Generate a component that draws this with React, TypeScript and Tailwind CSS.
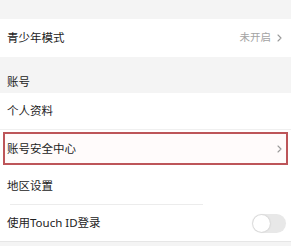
import React from "react";

const font = { fontFamily: '"Noto Sans", "Noto Sans CJK SC", sans-serif' };

const Chevron = ({ className = "" }: { className?: string }) => (
  <svg width="5" height="8" viewBox="0 0 5 8" className={className}>
    <path d="M1 1l3 3-3 3" fill="none" stroke="#9a9a9a" strokeWidth="1.1" strokeLinecap="round" strokeLinejoin="round" />
  </svg>
);

export default function App() {
  return (
    <div className="w-[291px] h-[246px] overflow-hidden bg-[#f4f4f4] text-[11.5px] text-[#222]" style={font}>
      <div className="h-[19px]" />
      <div className="flex h-[38px] items-center justify-between bg-white pl-[7px] pr-[9px]">
        <span>青少年模式</span>
        <div className="flex items-center gap-[6px] text-[10.5px] text-[#a3a3a3]">
          <span>未开启</span>
          <Chevron />
        </div>
      </div>
      <div className="flex h-[36px] items-end pb-[3px] pl-[7px]">
        <span>账号</span>
      </div>
      <div className="flex h-[37px] items-center border-b border-[#f0f0f0] bg-white pl-[7px]">
        <span>个人资料</span>
      </div>
      <div className="flex h-[37px] items-center bg-white px-[3px] py-[2px]">
        <div className="flex h-full flex-1 items-center justify-between border-2 border-[#bd5559] bg-[#fffbfb] pl-[2px] pr-[4px]">
          <span>账号安全中心</span>
          <Chevron />
        </div>
      </div>
      <div className="bg-white">
        <div className="flex h-[37px] items-center pl-[7px]">
          <span>地区设置</span>
        </div>
        <div className="ml-[10px] h-px w-[193px] bg-[#ececec]" />
      </div>
      <div className="flex h-[37px] items-center justify-between border-b border-[#e6e6e6] bg-white pl-[7px] pr-[5px]">
        <span>使用Touch ID登录</span>
        <div className="flex h-[19px] w-[34px] items-center rounded-full bg-[#e8e8e8] p-[1px]">
          <div className="h-[17px] w-[17px] rounded-full bg-white shadow-[0_0_2px_rgba(0,0,0,0.2)]" />
        </div>
      </div>
    </div>
  );
}
